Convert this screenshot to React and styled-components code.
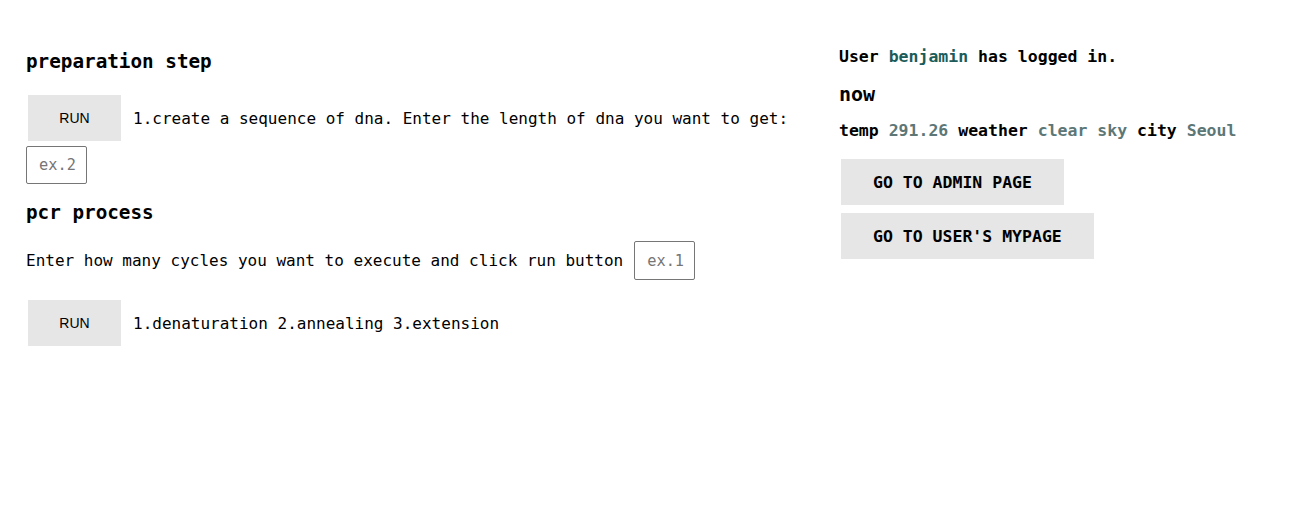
import styled, { createGlobalStyle } from 'styled-components';

const GlobalStyle = createGlobalStyle`
  body {
    margin: 8px;
    font-family: 'DejaVu Sans Mono', 'Liberation Mono', monospace;
    color: #000;
    background: #fff;
  }
`;

const Page = styled.div`
  display: grid;
  grid-template-columns: 813px 1fr;
  padding: 0 18px;
`;

const Column = styled.section`
  display: flex;
  flex-direction: column;
  align-items: flex-start;
`;

const Heading = styled.h3`
  margin: ${(props) => props.$top || 0}px 0 0;
  font-size: 19.3px;
  line-height: 24px;
  font-weight: bold;
`;

const Row = styled.div`
  display: flex;
  align-items: center;
  gap: ${(props) => props.$gap || 10}px;
  margin-top: ${(props) => props.$top || 0}px;
  font-size: 16px;
`;

const RunButton = styled.button`
  width: 93px;
  height: 46px;
  margin: 2px;
  border: none;
  border-radius: 0;
  background: #e6e6e6;
  color: #000;
  font-family: 'Liberation Sans', Arial, sans-serif;
  font-size: 14px;
  cursor: pointer;
`;

const Input = styled.input`
  box-sizing: border-box;
  width: 61px;
  height: ${(props) => props.$h || 38}px;
  margin-top: ${(props) => props.$top || 0}px;
  padding: 0 0 0 12px;
  border: 1px solid #767676;
  border-radius: 2px;
  font-family: 'DejaVu Sans Mono', monospace;
  font-size: 15.3px;
  &::placeholder {
    color: #767676;
  }
`;

const InfoLine = styled.p`
  margin: ${(props) => props.$top || 0}px 0 0;
  font-size: 16.5px;
  line-height: 20px;
  font-weight: bold;
`;

const Value = styled.span`
  color: ${(props) => props.$color};
`;

const Now = styled.h4`
  margin: 14px 0 0;
  font-size: 20px;
  line-height: 26px;
  font-weight: bold;
`;

const LinkButtons = styled.div`
  display: flex;
  flex-direction: column;
  align-items: flex-start;
  gap: 4px;
  margin-top: 16px;
`;

const NavButton = styled.button`
  height: 46px;
  margin: 2px;
  padding: 0 32px;
  border: none;
  background: #e6e6e6;
  color: #000;
  font-family: 'DejaVu Sans Mono', monospace;
  font-size: 16.5px;
  font-weight: bold;
  cursor: pointer;
`;

export default function App() {
  return (
    <>
      <GlobalStyle />
      <Page>
        <Column>
          <Heading $top={42}>preparation step</Heading>
          <Row $top={19}>
            <RunButton>RUN</RunButton>
            <span>1.create a sequence of dna. Enter the length of dna you want to get:</span>
          </Row>
          <Input placeholder="ex.2" $top={3} />
          <Heading $top={17}>pcr process</Heading>
          <Row $top={16} $gap={11}>
            <span>Enter how many cycles you want to execute and click run button</span>
            <Input placeholder="ex.1" $h={39} />
          </Row>
          <Row $top={18}>
            <RunButton>RUN</RunButton>
            <span>1.denaturation 2.annealing 3.extension</span>
          </Row>
        </Column>
        <Column>
          <InfoLine $top={39}>
            User <Value $color="#1b5c5a">benjamin</Value> has logged in.
          </InfoLine>
          <Now>now</Now>
          <InfoLine $top={14}>
            temp <Value $color="#5d7777">291.26</Value> weather{' '}
            <Value $color="#5d7777">clear sky</Value> city{' '}
            <Value $color="#5d7777">Seoul</Value>
          </InfoLine>
          <LinkButtons>
            <NavButton>GO TO ADMIN PAGE</NavButton>
            <NavButton>GO TO USER'S MYPAGE</NavButton>
          </LinkButtons>
        </Column>
      </Page>
    </>
  );
}
